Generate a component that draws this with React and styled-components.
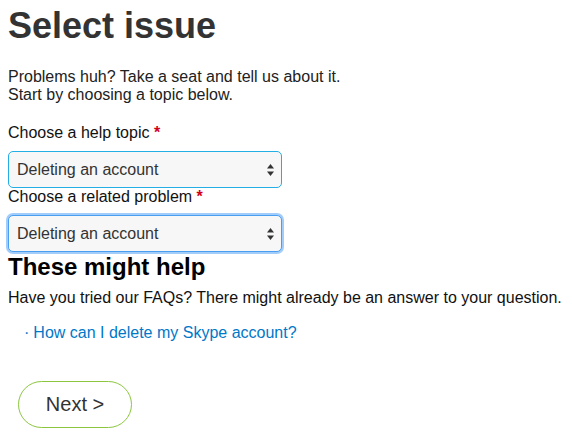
import React from 'react';
import styled, { createGlobalStyle } from 'styled-components';

const GlobalStyle = createGlobalStyle`
  body {
    margin: 0;
    background: #fff;
    font-family: "Liberation Sans", Arial, Helvetica, sans-serif;
  }
`;

const Page = styled.div`
  padding: 6px 8px 0 8px;
  width: 572px;
  box-sizing: border-box;
`;

const Title = styled.h1`
  margin: 0;
  font-size: 36px;
  line-height: 40px;
  font-weight: 700;
  color: #333;
`;

const Intro = styled.p`
  margin: 22px 0 0;
  font-size: 16px;
  line-height: 18px;
  color: #222;
`;

const Form = styled.div`
  margin-top: 20px;
  display: flex;
  flex-direction: column;
`;

const Label = styled.label`
  font-size: 16px;
  line-height: 18px;
  color: #111;
`;

const Required = styled.span`
  color: #d0021b;
  font-weight: 700;
`;

const SelectWrap = styled.div`
  position: relative;
  width: 274px;
  margin-top: 9px;
`;

const Select = styled.select`
  appearance: none;
  -webkit-appearance: none;
  width: 100%;
  height: 37px;
  box-sizing: border-box;
  padding: 0 28px 0 8px;
  font-family: "Liberation Sans", Arial, sans-serif;
  font-size: 16px;
  color: #333;
  background: #f7f7f7;
  border: 1px solid ${p => (p.$focused ? '#4a9ef2' : '#24aee6')};
  border-radius: 5px;
  box-shadow: ${p => (p.$focused ? '0 0 0 2px rgba(86, 162, 246, 0.55)' : 'none')};
  outline: none;
`;

const Arrows = styled.svg`
  position: absolute;
  right: 8px;
  top: 50%;
  transform: translateY(-50%);
  pointer-events: none;
`;

const HelpTitle = styled.h2`
  margin: 1px 0 0;
  font-size: 24px;
  line-height: 28px;
  font-weight: 700;
  color: #000;
`;

const HelpText = styled.p`
  margin: 8px 0 0;
  font-size: 16px;
  line-height: 18px;
  color: #111;
`;

const Links = styled.ul`
  list-style: none;
  margin: 17px 0 0;
  padding: 0 0 0 16px;
`;

const LinkItem = styled.li`
  font-size: 16px;
  line-height: 18px;
  color: #0078c8;

  &:before {
    content: '·';
    margin-right: 4px;
  }
`;

const FaqLink = styled.a`
  color: #0078c8;
  text-decoration: none;
`;

const NextButton = styled.button`
  margin: 39px 0 0 10px;
  width: 114px;
  height: 47px;
  border: 1px solid #8cc63f;
  border-radius: 24px;
  background: #fff;
  font-family: "Liberation Sans", Arial, sans-serif;
  font-size: 20px;
  color: #333;
  cursor: pointer;
`;

const SelectField = ({ focused }) => (
  <SelectWrap>
    <Select $focused={focused} defaultValue="delete">
      <option value="delete">Deleting an account</option>
    </Select>
    <Arrows width="7" height="12" viewBox="0 0 7 12">
      <path d="M3.5 0 L7 4.5 L0 4.5 Z" fill="#333" />
      <path d="M3.5 12 L7 7.5 L0 7.5 Z" fill="#333" />
    </Arrows>
  </SelectWrap>
);

const App = () => (
  <Page>
    <GlobalStyle />
    <Title>Select issue</Title>
    <Intro>
      Problems huh? Take a seat and tell us about it.
      <br />
      Start by choosing a topic below.
    </Intro>
    <Form>
      <Label>
        Choose a help topic <Required>*</Required>
      </Label>
      <SelectField />
      <Label>
        Choose a related problem <Required>*</Required>
      </Label>
      <SelectField focused />
    </Form>
    <HelpTitle>These might help</HelpTitle>
    <HelpText>Have you tried our FAQs? There might already be an answer to your question.</HelpText>
    <Links>
      <LinkItem>
        <FaqLink href="#">How can I delete my Skype account?</FaqLink>
      </LinkItem>
    </Links>
    <NextButton>Next &gt;</NextButton>
  </Page>
);

export default App;
